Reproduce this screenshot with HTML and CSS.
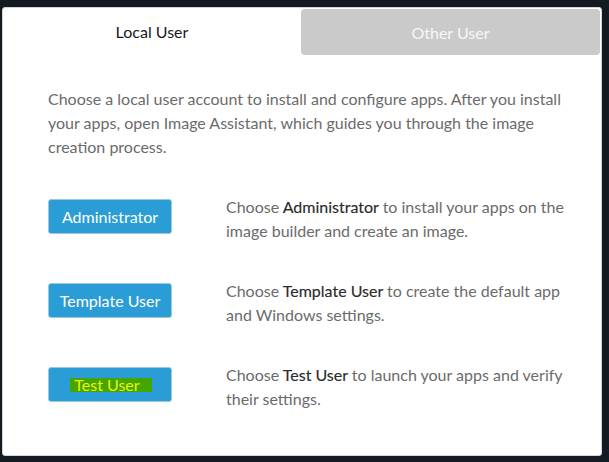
FILE: index.html
```html
<!DOCTYPE html>
<html lang="en">
<head>
    <meta charset="UTF-8">
    <title>Image Builder - Local User</title>
    <link rel="stylesheet" href="styles.css">
</head>
<body>
    <div class="card">
        <div class="tabs">
            <div class="tab active">Local User</div>
            <div class="tab inactive">Other User</div>
        </div>
        <div class="content">
            <p class="intro">Choose a local user account to install and configure apps. After you install your apps, open Image Assistant, which guides you through the image creation process.</p>
            <div class="user-row">
                <button class="user-btn">Administrator</button>
                <p class="desc">Choose <b>Administrator</b> to install your apps on the image builder and create an image.</p>
            </div>
            <div class="user-row">
                <button class="user-btn">Template User</button>
                <p class="desc">Choose <b>Template User</b> to create the default app and Windows settings.</p>
            </div>
            <div class="user-row">
                <button class="user-btn"><span class="marker">Test User</span></button>
                <p class="desc">Choose <b>Test User</b> to launch your apps and verify their settings.</p>
            </div>
        </div>
    </div>
</body>
</html>
```

FILE: styles.css
```css
body {
    margin: 0;
    padding: 7px 0 0 2px;
    background-color: #131a22;
    font-family: Lato, 'Open Sans', sans-serif;
    height: 462px;
    box-sizing: border-box;
}
.card {
    width: 600px;
    height: 449px;
    background-color: #ffffff;
    border-radius: 3px;
    box-sizing: border-box;
    border: 1px solid #d5d5d5;
}
.tabs {
    display: grid;
    grid-template-columns: 298px 1fr;
    height: 47px;
}
.tab {
    display: flex;
    align-items: center;
    justify-content: center;
    font-size: 16px;
}
.tab.active {
    color: #16191f;
}
.tab.inactive {
    background-color: #cacaca;
    color: #f7f7f7;
    margin: 1px 1px 0 0;
    border-radius: 4px;
}
.content {
    padding: 32px 20px 0 45px;
}
.intro {
    margin: 0 0 36px 0;
    font-size: 16px;
    line-height: 24px;
    color: #6b6b6b;
}
.user-row {
    display: flex;
    align-items: flex-start;
    gap: 54px;
    margin-bottom: 36px;
}
.user-btn {
    width: 124px;
    height: 35px;
    margin-top: 4px;
    flex-shrink: 0;
    background-color: #2a9dd6;
    border: 1px solid #9cc7dd;
    border-radius: 3px;
    color: #ffffff;
    font-family: inherit;
    font-size: 16px;
    padding: 0;
}
.marker {
    display: inline-block;
    margin-left: 2px;
    padding: 0 12px 0 4px;
    line-height: 14px;
    background-color: #45a600;
    color: #e8f500;
}
.desc {
    margin: 0;
    width: 350px;
    font-size: 16px;
    line-height: 24px;
    color: #6b6b6b;
}
.desc b {
    font-weight: normal;
    color: #2b2b2b;
    -webkit-text-stroke: 0.15px #2b2b2b;
}
```
